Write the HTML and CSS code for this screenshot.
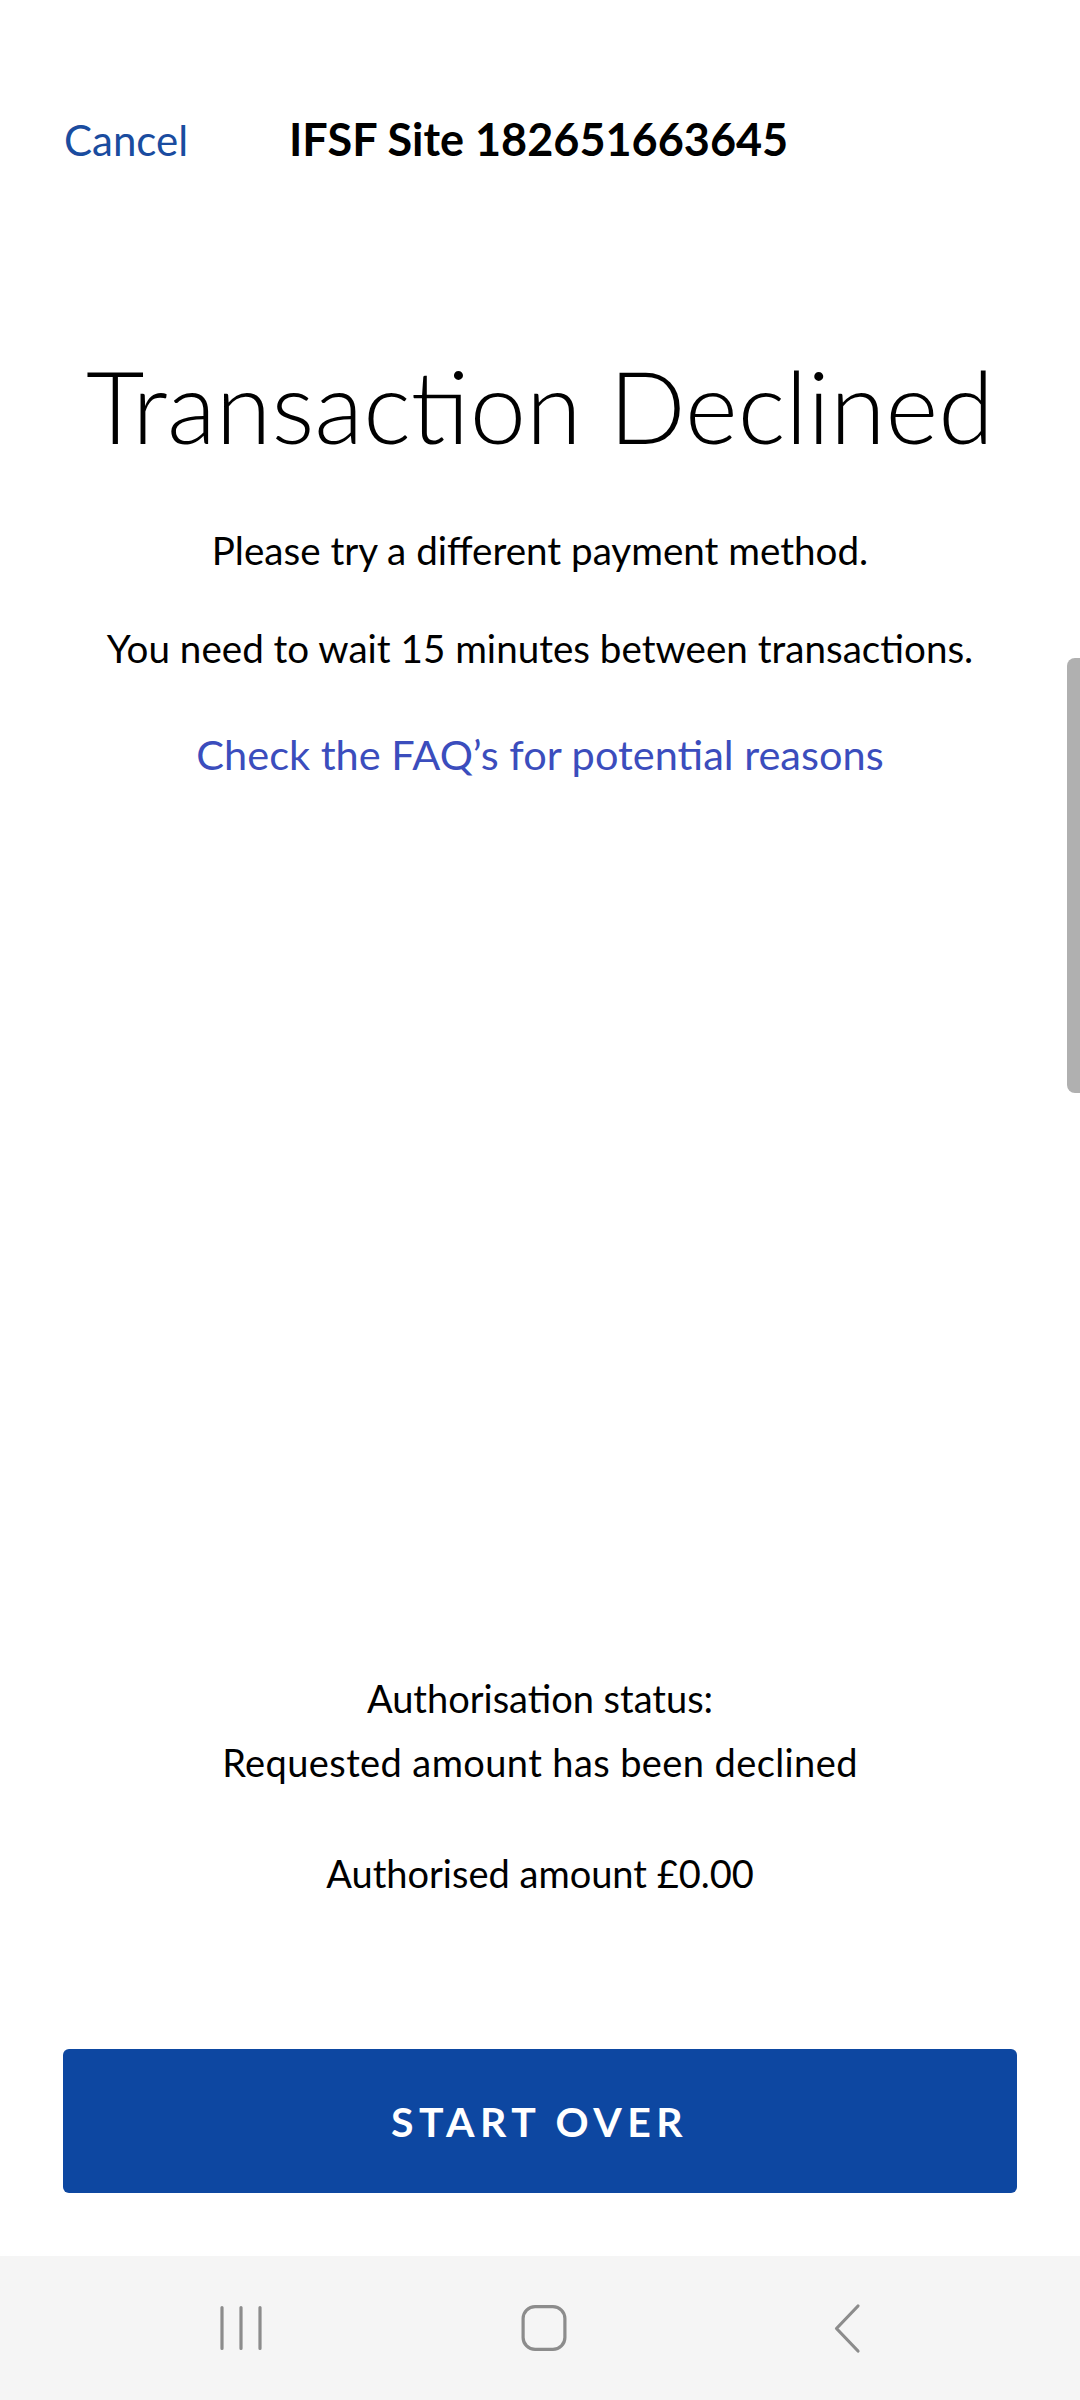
FILE: index.html
```html
<!DOCTYPE html>
<html>
<head>
<meta charset="utf-8">
<link rel="stylesheet" href="styles.css">
</head>
<body>
<div class="screen">
  <header class="topbar">
    <span class="cancel">Cancel</span>
    <span class="site">IFSF Site 182651663645</span>
  </header>
  <main class="content">
    <h1 class="headline">Transaction Declined</h1>
    <p class="msg msg-first">Please try a different payment method.</p>
    <p class="msg msg-second">You need to wait 15 minutes between transactions.</p>
    <p class="faq">Check the FAQ’s for potential reasons</p>
  </main>
  <section class="status">
    <p class="status-line">Authorisation status:</p>
    <p class="status-line wide">Requested amount has been declined</p>
    <p class="status-line amount">Authorised amount £0.00</p>
  </section>
  <div class="actions">
    <button class="start-over">START OVER</button>
  </div>
  <nav class="navbar">
    <svg class="nav-icon" width="60" height="60" viewBox="0 0 60 60">
      <path d="M11 9.5v41M30 9.5v41M49 9.5v41" stroke="#8c8c8c" stroke-width="3.2" stroke-linecap="round" fill="none"/>
    </svg>
    <svg class="nav-icon" width="60" height="60" viewBox="0 0 60 60">
      <rect x="9.1" y="8.6" width="41.8" height="42.8" rx="12" stroke="#8c8c8c" stroke-width="3.2" fill="none"/>
    </svg>
    <svg class="nav-icon" width="60" height="60" viewBox="0 0 60 60">
      <path d="M41 8L19.5 30.5L41 53" stroke="#8c8c8c" stroke-width="3.2" stroke-linecap="round" stroke-linejoin="round" fill="none"/>
    </svg>
  </nav>
  <div class="scrollbar"></div>
</div>
</body>
</html>
```
FILE: styles.css
```css
html, body {
  margin: 0;
  padding: 0;
  background: #ffffff;
}
body {
  font-family: Lato, "Open Sans", "Liberation Sans", sans-serif;
  color: #000000;
}
.screen {
  position: relative;
  width: 1080px;
  height: 2400px;
  display: flex;
  flex-direction: column;
  overflow: hidden;
}
.topbar {
  display: flex;
  align-items: baseline;
  padding: 109px 0 0 64px;
  height: 60px;
}
.cancel {
  font-size: 42px;
  line-height: 60px;
  font-weight: 400;
  color: #1a4c9f;
  width: 225px;
}
.site {
  font-size: 45px;
  line-height: 60px;
  font-weight: 700;
  color: #000;
}
.content {
  display: flex;
  flex-direction: column;
  align-items: center;
  text-align: center;
}
.headline {
  margin: 176px 0 0 0;
  font-size: 101px;
  line-height: 120px;
  font-weight: 300;
  letter-spacing: 0;
}
.msg {
  margin: 0;
  font-size: 38.6px;
  line-height: 50px;
  font-weight: 400;
}
.msg-first { margin-top: 60px; }
.msg-second { margin-top: 48px; }
.faq {
  margin: 53px 0 0 0;
  font-size: 41.5px;
  line-height: 56px;
  color: #3b4dbd;
}
.status {
  margin-top: auto;
  display: flex;
  flex-direction: column;
  align-items: center;
  text-align: center;
}
.status-line {
  margin: 0;
  font-size: 38px;
  line-height: 64px;
}
.status-line.wide {
  letter-spacing: 0.4px;
}
.status-line.amount {
  margin-top: 47px;
}
.actions {
  padding: 144px 63px 63px 63px;
}
.start-over {
  display: block;
  width: 100%;
  height: 144px;
  border: none;
  border-radius: 6px;
  background: #0d47a1;
  color: #ffffff;
  font-family: Lato, "Open Sans", sans-serif;
  font-size: 41px;
  font-weight: 700;
  letter-spacing: 5.5px;
  padding-left: 5px;
}
.navbar {
  height: 144px;
  background: #f5f5f5;
  display: flex;
  align-items: center;
  gap: 243px;
  padding-left: 211px;
}
.nav-icon {
  display: block;
  flex: none;
}
.scrollbar {
  position: absolute;
  right: 0;
  top: 658px;
  width: 13px;
  height: 435px;
  background: #b0b0b0;
  border-radius: 8px 0 0 8px;
}
```
